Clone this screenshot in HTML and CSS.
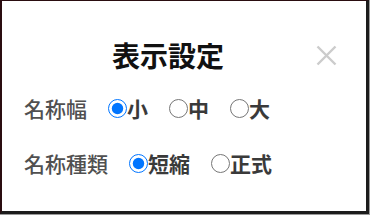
FILE: index.html
```html
<!DOCTYPE html>
<html lang="ja">

<head>
    <meta charset="UTF-8">
    <meta name="viewport" content="width=device-width, initial-scale=1.0">
    <title>表示設定</title>
    <link rel="stylesheet" href="styles.css">
</head>

<body>
    <div class="dialog">
        <div class="dialog-head">
            <h2 class="dialog-title">表示設定</h2>
            <button class="close-btn" aria-label="閉じる">
                <svg width="21" height="21" viewBox="0 0 21 21">
                    <path d="M1.5 1.5 L19.5 19.5 M19.5 1.5 L1.5 19.5" stroke="#cccccc" stroke-width="2.4" fill="none" />
                </svg>
            </button>
        </div>

        <div class="setting-row">
            <span class="setting-label">名称幅</span>
            <div class="options">
                <label class="option"><input type="radio" name="width" checked>小</label>
                <label class="option"><input type="radio" name="width">中</label>
                <label class="option"><input type="radio" name="width">大</label>
            </div>
        </div>

        <div class="setting-row second">
            <span class="setting-label">名称種類</span>
            <div class="options">
                <label class="option"><input type="radio" name="kind" checked>短縮</label>
                <label class="option"><input type="radio" name="kind">正式</label>
            </div>
        </div>
    </div>
</body>

</html>
```

FILE: styles.css
```css
* {
    margin: 0;
    padding: 0;
    box-sizing: border-box;
}

body {
    font-family: "Noto Sans CJK JP", "Noto Sans", sans-serif;
    background: #9a9a9a;
    width: 370px;
    height: 215px;
    overflow: hidden;
}

.dialog {
    width: 369px;
    height: 214px;
    background: #ffffff;
    border-style: solid;
    border-color: #1c1c1c;
    border-width: 1px 3px 3px 2px;
    border-left-color: #2a0d10;
    border-top-color: #2a0d10;
    padding: 38px 0 0;
    display: flex;
    flex-direction: column;
}

.dialog-head {
    display: flex;
    align-items: center;
    height: 32px;
    padding: 0 20px 0 28px;
}

.dialog-title {
    flex: 1;
    text-align: center;
    font-size: 28px;
    line-height: 32px;
    font-weight: 700;
    color: #111111;
}

.close-btn {
    background: none;
    border: none;
    width: 40px;
    height: 32px;
    display: flex;
    justify-content: center;
    align-items: center;
    cursor: pointer;
}

.setting-row {
    display: flex;
    align-items: center;
    gap: 21px;
    height: 30px;
    margin-top: 22px;
    padding-left: 22px;
}

.setting-row.second {
    margin-top: 25px;
}

.setting-label {
    font-size: 21px;
    line-height: 30px;
    font-weight: 500;
    color: #505050;
}

.options {
    display: flex;
    align-items: center;
    gap: 21px;
}

.option {
    display: flex;
    align-items: center;
    font-size: 21px;
    line-height: 30px;
    font-weight: 700;
    color: #3a3a3a;
    cursor: pointer;
}

.option input {
    width: 19px;
    height: 19px;
    margin: 0;
}
```
